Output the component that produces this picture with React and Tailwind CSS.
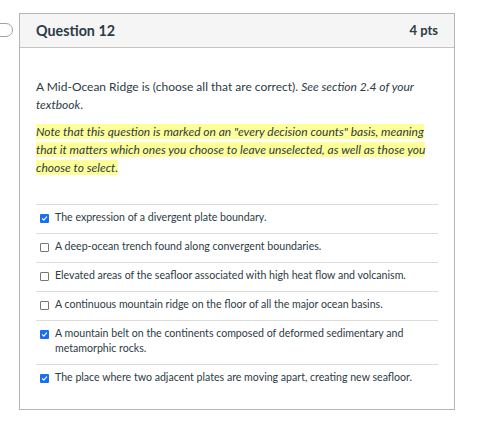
import React from "react";

const answers = [
  { text: "The expression of a divergent plate boundary.", checked: true },
  { text: "A deep-ocean trench found along convergent boundaries.", checked: false },
  { text: "Elevated areas of the seafloor associated with high heat flow and volcanism.", checked: false },
  { text: "A continuous mountain ridge on the floor of all the major ocean basins.", checked: false },
  {
    text: "A mountain belt on the continents composed of deformed sedimentary and metamorphic rocks.",
    checked: true,
  },
  { text: "The place where two adjacent plates are moving apart, creating new seafloor.", checked: true },
];

const Checkbox = ({ checked }) =>
  checked ? (
    <span className="mt-[4px] flex h-[9px] w-[9px] shrink-0 items-center justify-center rounded-[1px] bg-[#1a6ef5]">
      <svg viewBox="0 0 10 10" className="h-[7px] w-[7px]">
        <path d="M2 5.2l2 2 4-4.4" fill="none" stroke="#fff" strokeWidth="1.6" strokeLinecap="round" strokeLinejoin="round" />
      </svg>
    </span>
  ) : (
    <span className="mt-[4px] h-[9px] w-[9px] shrink-0 rounded-[1px] border border-[#767676] bg-white" />
  );

const App = () => {
  return (
    <div className="h-[421px] w-[485px] bg-white font-['Lato','Noto_Sans',sans-serif] text-[#2d3b45]">
      <div className="flex items-start pt-[13px]">
        {/* flag tab */}
        <div className="ml-[-3px] mt-[10px] h-[14px] w-[16px] rounded-r-full border border-[#9aa2a8] bg-white" />

        <div className="ml-[6px] w-[436px] border border-[#b5b5b5]">
          {/* header */}
          <div className="flex h-[34px] items-center justify-between border-b border-[#c4c4c4] bg-[#f5f5f5] px-[16px]">
            <span className="text-[14.3px] font-bold">Question 12</span>
            <span className="text-[13px] font-bold">4 pts</span>
          </div>

          {/* body */}
          <div className="px-[16px] pb-[16px] pt-[30px]">
            <p className="text-[12px] leading-[18px]">
              A Mid-Ocean Ridge is (choose all that are correct). <em>See section 2.4 of your textbook</em>.
            </p>
            <p className="mt-[9px] text-[12px] leading-[18px]">
              <em className="bg-[#ffff99]">
                Note that this question is marked on an "every decision counts" basis, meaning that it matters which
                ones you choose to leave unselected, as well as those you choose to select.
              </em>
            </p>

            <div className="mt-[27px]">
              {answers.map((a, i) => (
                <div key={i} className="flex gap-[6px] border-t border-[#dcdcdc] pb-[8px] pl-[4px] pr-[8px] pt-[5px]">
                  <Checkbox checked={a.checked} />
                  <span className="text-[10.6px] leading-[15px]">{a.text}</span>
                </div>
              ))}
            </div>
          </div>
        </div>
      </div>
    </div>
  );
};

export default App;
